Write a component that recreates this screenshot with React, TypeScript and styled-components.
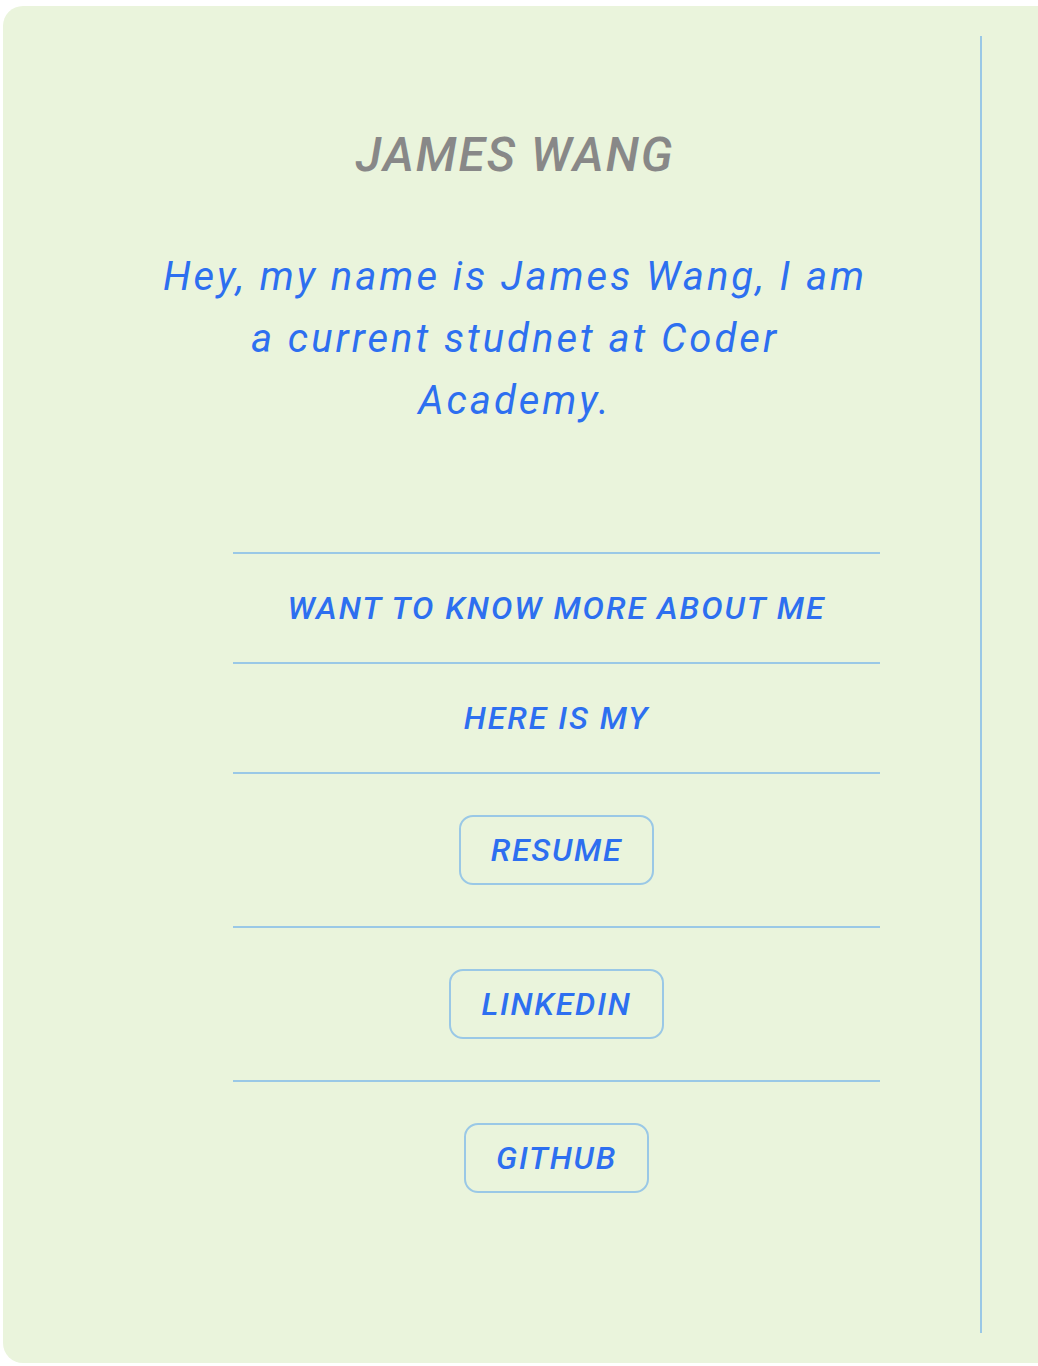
import React from "react";
import styled, { createGlobalStyle } from "styled-components";

const GlobalStyle = createGlobalStyle`
  html, body {
    margin: 0;
    padding: 0;
    background: #ffffff;
    overflow-x: hidden;
  }
  body {
    font-family: Roboto, "Liberation Sans", Arial, sans-serif;
  }
`;

const Card = styled.main`
  margin: 6px 0 0 3px;
  width: 1100px;
  height: 1357px;
  box-sizing: border-box;
  background: #eaf4dc;
  border-radius: 20px;
  display: flex;
  align-items: stretch;
  padding: 30px 0;
`;

const Column = styled.section`
  width: 979px;
  box-sizing: border-box;
  border-right: 2px solid #9ac8e6;
  display: flex;
  flex-direction: column;
  padding-top: 91px;
`;

const Intro = styled.header`
  width: 720px;
  margin-left: 152px;
  display: flex;
  flex-direction: column;
  align-items: center;
  text-align: center;
`;

const Name = styled.h1`
  margin: 0;
  font-family: Roboto, "Liberation Sans", Arial, sans-serif;
  font-style: italic;
  font-weight: 500;
  font-size: 48px;
  line-height: 56px;
  letter-spacing: 2px;
  color: #888888;
`;

const Bio = styled.p`
  margin: 63px 0 0;
  font-style: italic;
  font-weight: 400;
  font-size: 40px;
  line-height: 62px;
  letter-spacing: 3px;
  color: #2d6ff0;
`;

const Links = styled.nav`
  width: 647px;
  margin: 120px 0 0 230px;
  display: flex;
  flex-direction: column;
`;

const Row = styled.div<{ $pad: number }>`
  border-top: 2px solid #9ac8e6;
  padding: ${(p) => p.$pad}px 0;
  display: flex;
  justify-content: center;
  align-items: center;
`;

const Label = styled.span`
  font-style: italic;
  font-weight: 500;
  font-size: 32px;
  line-height: 36px;
  letter-spacing: 2px;
  color: #2d6ff0;
  text-transform: uppercase;
`;

const LinkButton = styled.a`
  box-sizing: border-box;
  height: 70px;
  padding: 0 30px;
  display: inline-flex;
  align-items: center;
  justify-content: center;
  border: 2px solid #9ac8e6;
  border-radius: 14px;
  text-decoration: none;
  font-style: italic;
  font-weight: 500;
  font-size: 32px;
  letter-spacing: 1.8px;
  color: #2d6ff0;
`;

export default function App() {
  return (
    <>
      <GlobalStyle />
      <Card>
        <Column>
          <Intro>
            <Name>JAMES WANG</Name>
            <Bio>
              Hey, my name is James Wang, I am a current studnet at Coder
              Academy.
            </Bio>
          </Intro>
          <Links>
            <Row $pad={36}>
              <Label>Want to know more about me</Label>
            </Row>
            <Row $pad={36}>
              <Label>Here is my</Label>
            </Row>
            <Row $pad={41}>
              <LinkButton href="#resume">RESUME</LinkButton>
            </Row>
            <Row $pad={41}>
              <LinkButton href="#linkedin">LINKEDIN</LinkButton>
            </Row>
            <Row $pad={41}>
              <LinkButton href="#github">GITHUB</LinkButton>
            </Row>
          </Links>
        </Column>
      </Card>
    </>
  );
}
